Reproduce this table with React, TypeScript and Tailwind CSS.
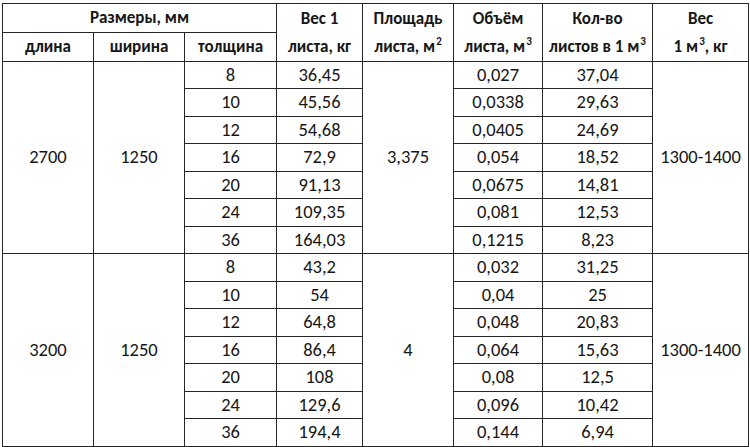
const groups = [
  {
    length: "2700",
    width: "1250",
    area: "3,375",
    density: "1300-1400",
    rows: [
      ["8", "36,45", "0,027", "37,04"],
      ["10", "45,56", "0,0338", "29,63"],
      ["12", "54,68", "0,0405", "24,69"],
      ["16", "72,9", "0,054", "18,52"],
      ["20", "91,13", "0,0675", "14,81"],
      ["24", "109,35", "0,081", "12,53"],
      ["36", "164,03", "0,1215", "8,23"],
    ],
  },
  {
    length: "3200",
    width: "1250",
    area: "4",
    density: "1300-1400",
    rows: [
      ["8", "43,2", "0,032", "31,25"],
      ["10", "54", "0,04", "25"],
      ["12", "64,8", "0,048", "20,83"],
      ["16", "86,4", "0,064", "15,63"],
      ["20", "108", "0,08", "12,5"],
      ["24", "129,6", "0,096", "10,42"],
      ["36", "194,4", "0,144", "6,94"],
    ],
  },
];

// alternate 27/28 so each group is ~192.5px like the source
const rowHeights = [
  ["h-[27px]", "h-[28px]", "h-[27px]", "h-[28px]", "h-[27px]", "h-[28px]", "h-[27px]"],
  ["h-[28px]", "h-[27px]", "h-[28px]", "h-[27px]", "h-[28px]", "h-[27px]", "h-[28px]"],
];

const cell = "border border-[#262626] p-0 text-center align-middle";
const head = cell + " font-bold text-[17px] leading-[28px]";

function Sup({ children }: { children: string }) {
  return (
    <span className="relative -top-[7px] ml-[1px] text-[11px] leading-none font-bold">
      {children}
    </span>
  );
}

export default function App() {
  return (
    <div className="w-[750px] h-[447px] bg-white pl-[2px] pt-[3px] text-[#161616] [font-family:Carlito,Lato,sans-serif]">
      <table className="table-fixed border-collapse w-[746px]">
        <colgroup>
          <col className="w-[91px]" />
          <col className="w-[91px]" />
          <col className="w-[92px]" />
          <col className="w-[86px]" />
          <col className="w-[91px]" />
          <col className="w-[89px]" />
          <col className="w-[110px]" />
          <col className="w-[96px]" />
        </colgroup>
        <thead>
          <tr className="h-[27px]">
            <th colSpan={3} className={head}>Размеры, мм</th>
            <th rowSpan={2} className={head}>
              Вес 1<br />листа, кг
            </th>
            <th rowSpan={2} className={head}>
              Площадь<br />листа, м<Sup>2</Sup>
            </th>
            <th rowSpan={2} className={head}>
              Объём<br />листа, м<Sup>3</Sup>
            </th>
            <th rowSpan={2} className={head}>
              Кол-во<br />листов в 1 м<Sup>3</Sup>
            </th>
            <th rowSpan={2} className={head}>
              Вес<br />1 м<Sup>3</Sup>, кг
            </th>
          </tr>
          <tr className="h-[28px]">
            <th className={head}>длина</th>
            <th className={head}>ширина</th>
            <th className={head}>толщина</th>
          </tr>
        </thead>
        <tbody className="text-[18.5px] leading-none">
          {groups.map((g, gi) =>
            g.rows.map((r, i) => (
              <tr key={gi + "-" + i} className={rowHeights[gi][i]}>
                {i === 0 && (
                  <>
                    <td rowSpan={7} className={cell}>{g.length}</td>
                    <td rowSpan={7} className={cell}>{g.width}</td>
                  </>
                )}
                <td className={cell}>{r[0]}</td>
                <td className={cell}>{r[1]}</td>
                {i === 0 && (
                  <td rowSpan={7} className={cell}>{g.area}</td>
                )}
                <td className={cell}>{r[2]}</td>
                <td className={cell}>{r[3]}</td>
                {i === 0 && (
                  <td rowSpan={7} className={cell}>{g.density}</td>
                )}
              </tr>
            ))
          )}
        </tbody>
      </table>
    </div>
  );
}
